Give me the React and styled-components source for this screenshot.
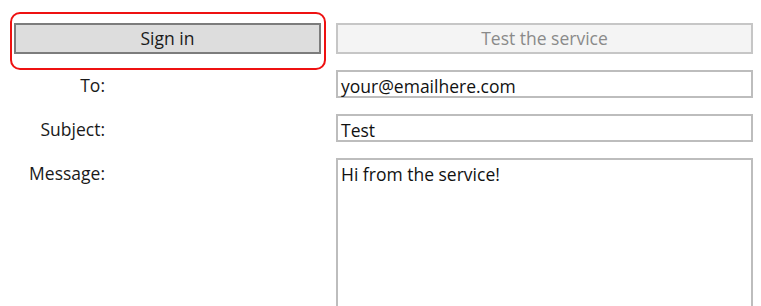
import React from "react";
import styled, { createGlobalStyle } from "styled-components";

const GlobalStyle = createGlobalStyle`
  html, body {
    margin: 0;
    padding: 0;
    height: 306px;
    background: #ffffff;
    overflow: hidden;
  }
  body {
    font-family: "Open Sans", "Noto Sans", sans-serif;
  }
`;

const Form = styled.div`
  display: grid;
  grid-template-columns: 307px 417px;
  grid-template-rows: 31px 28px 28px 160px;
  column-gap: 15px;
  row-gap: 16px;
  padding: 23px 0 0 14px;
`;

const Highlight = styled.div`
  position: relative;

  &::after {
    content: "";
    position: absolute;
    top: -11px;
    left: -4px;
    right: -5px;
    bottom: -16px;
    border: 2px solid #ee1111;
    border-radius: 10px;
    pointer-events: none;
  }
`;

const Button = styled.button`
  box-sizing: border-box;
  width: 100%;
  height: 31px;
  margin: 0;
  padding: 0 0 2px;
  font-family: inherit;
  font-size: 17.5px;
  color: ${(p) => (p.disabled ? "#8a8a8a" : "#1a1a1a")};
  background: ${(p) => (p.disabled ? "#f4f4f4" : "#dddddd")};
  border: 2px solid ${(p) => (p.disabled ? "#c6c6c6" : "#7c7c7c")};
  border-radius: 0;
`;

const Label = styled.div`
  box-sizing: border-box;
  padding: 3px 216px 0 0;
  text-align: right;
  font-size: 17.5px;
  line-height: 24px;
  color: #1a1a1a;
`;

const Field = styled.div`
  box-sizing: border-box;
  height: ${(p) => (p.tall ? "160px" : "28px")};
  padding: 2px 3px 0;
  font-size: 17.5px;
  line-height: 24px;
  color: #111111;
  background: #ffffff;
  border: 2px solid #bdbdbd;
  border-bottom-width: ${(p) => (p.tall ? "0" : "2px")};
  white-space: nowrap;
`;

export default function App() {
  return (
    <>
      <GlobalStyle />
      <Form>
        <Highlight>
          <Button>Sign in</Button>
        </Highlight>
        <Button disabled>Test the service</Button>

        <Label>To:</Label>
        <Field>your@emailhere.com</Field>

        <Label>Subject:</Label>
        <Field>Test</Field>

        <Label>Message:</Label>
        <Field tall>Hi from the service!</Field>
      </Form>
    </>
  );
}
